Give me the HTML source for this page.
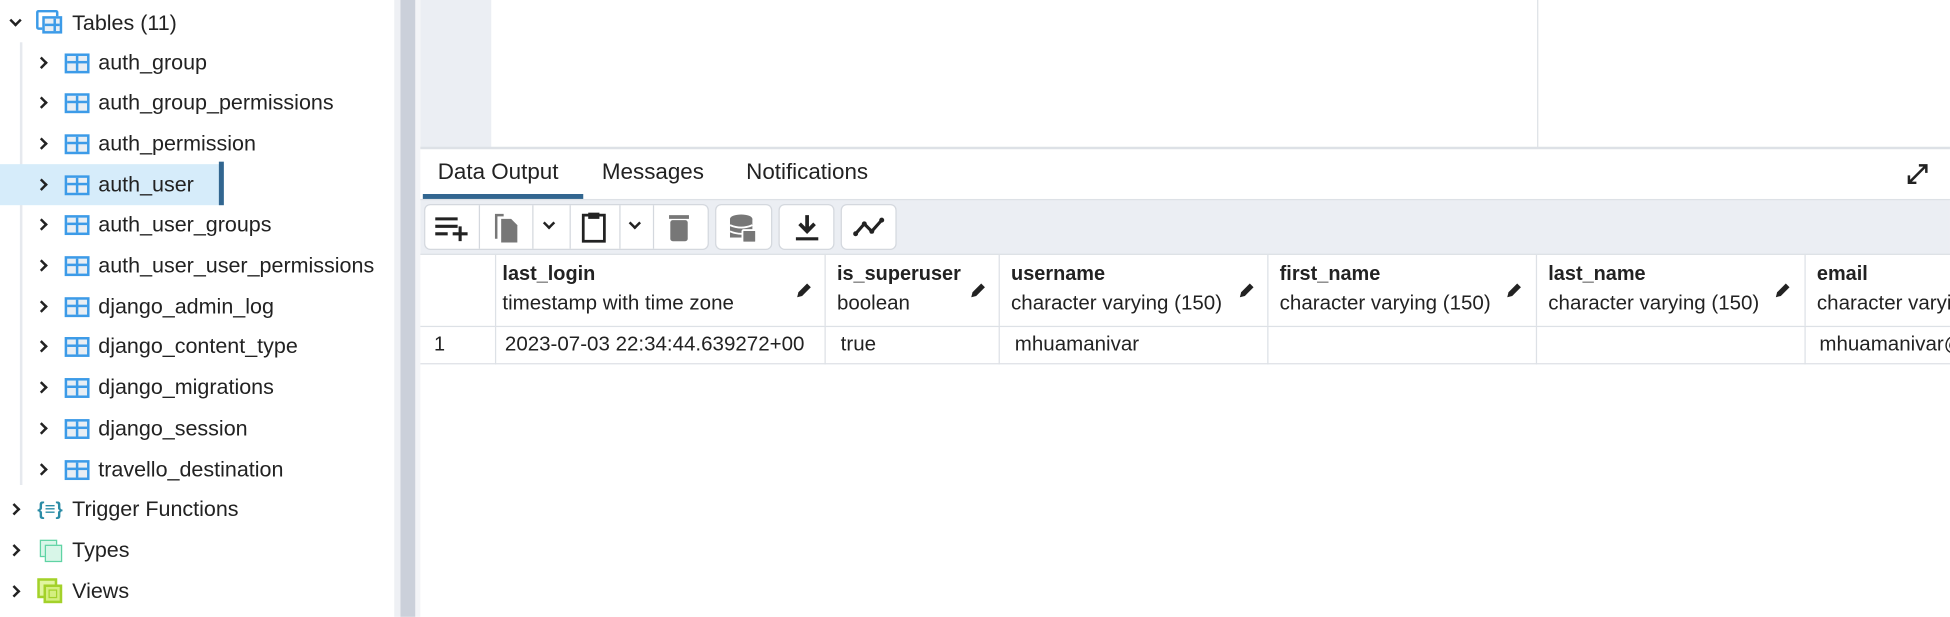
<!DOCTYPE html>
<html><head><meta charset="utf-8"><style>
*{margin:0;padding:0;box-sizing:border-box}
html,body{width:1950px;height:617px;overflow:hidden;background:#fff}
#w{position:absolute;left:0;top:0;width:1568px;height:496px;transform:scale(1.2436);transform-origin:0 0;font-family:"Liberation Sans",sans-serif;color:#222}
.a{position:absolute}
.tr{position:absolute;left:0;height:33px;width:318px;font-size:17.3px;line-height:33px;white-space:nowrap}
.chev{position:absolute;width:7px;height:7px;border-right:2px solid #222;border-top:2px solid #222;transform:rotate(45deg)}
.ti{position:absolute;width:20px;height:16px;border:2px solid #3c9be8;background:#e8eef4}
.ti:before{content:"";position:absolute;left:0;right:0;top:4px;border-top:2px solid #3c9be8}
.ti:after{content:"";position:absolute;top:0;bottom:0;left:7px;border-left:2px solid #3c9be8}
.th{position:absolute;top:205px;height:57px;border-right:1px solid #dde1e6;padding:5px 0 0 6px;overflow:hidden}
.th b{display:block;font-size:16px;line-height:22px;color:#222}
.th span{display:block;font-size:16.5px;line-height:24px;color:#222;white-space:nowrap}
.td{position:absolute;top:262px;height:31px;border-right:1px solid #dde1e6;font-size:16.5px;line-height:31px;padding-left:8px;white-space:nowrap;overflow:hidden}
.pen{position:absolute;top:226px;width:14px;height:14px}
.btn{position:absolute;top:164px;height:37px;background:#fff;border:1px solid #d4d8de;border-radius:5px}
</style></head><body><div id="w">
<div class="a" style="left:16px;top:34px;width:2px;height:356px;background:#e6e9ee"></div>
<div class="a" style="left:0;top:132px;width:180px;height:33px;background:#d6ecfa"></div>
<div class="a" style="left:176px;top:130px;width:4px;height:35px;background:#326690"></div>
<div class="tr" style="top:2px"><div class="chev" style="left:9px;top:11px;transform:rotate(135deg)"></div>
<div class="a" style="left:29px;top:6px;width:18px;height:16px;border:2px solid #3c9be8;border-radius:2px"></div><div class="ti" style="left:34px;top:11px;width:16px;height:14px"></div>
<span class="a" style="left:58px">Tables (11)</span></div>
<div class="tr" style="top:34px"><div class="chev" style="left:30px;top:13px"></div><div class="ti" style="left:52px;top:9px"></div><span class="a" style="left:79px">auth_group</span></div>
<div class="tr" style="top:66px"><div class="chev" style="left:30px;top:13px"></div><div class="ti" style="left:52px;top:9px"></div><span class="a" style="left:79px">auth_group_permissions</span></div>
<div class="tr" style="top:99px"><div class="chev" style="left:30px;top:13px"></div><div class="ti" style="left:52px;top:9px"></div><span class="a" style="left:79px">auth_permission</span></div>
<div class="tr" style="top:132px"><div class="chev" style="left:30px;top:13px"></div><div class="ti" style="left:52px;top:9px"></div><span class="a" style="left:79px">auth_user</span></div>
<div class="tr" style="top:164px"><div class="chev" style="left:30px;top:13px"></div><div class="ti" style="left:52px;top:9px"></div><span class="a" style="left:79px">auth_user_groups</span></div>
<div class="tr" style="top:197px"><div class="chev" style="left:30px;top:13px"></div><div class="ti" style="left:52px;top:9px"></div><span class="a" style="left:79px">auth_user_user_permissions</span></div>
<div class="tr" style="top:230px"><div class="chev" style="left:30px;top:13px"></div><div class="ti" style="left:52px;top:9px"></div><span class="a" style="left:79px">django_admin_log</span></div>
<div class="tr" style="top:262px"><div class="chev" style="left:30px;top:13px"></div><div class="ti" style="left:52px;top:9px"></div><span class="a" style="left:79px">django_content_type</span></div>
<div class="tr" style="top:295px"><div class="chev" style="left:30px;top:13px"></div><div class="ti" style="left:52px;top:9px"></div><span class="a" style="left:79px">django_migrations</span></div>
<div class="tr" style="top:328px"><div class="chev" style="left:30px;top:13px"></div><div class="ti" style="left:52px;top:9px"></div><span class="a" style="left:79px">django_session</span></div>
<div class="tr" style="top:361px"><div class="chev" style="left:30px;top:13px"></div><div class="ti" style="left:52px;top:9px"></div><span class="a" style="left:79px">travello_destination</span></div>
<div class="tr" style="top:393px"><div class="chev" style="left:8px;top:13px"></div>
<span class="a" style="left:30px;top:0;color:#2b8ca6;font-size:15px;font-weight:bold">{≡}</span><span class="a" style="left:58px">Trigger Functions</span></div>
<div class="tr" style="top:426px"><div class="chev" style="left:8px;top:13px"></div>
<div class="a" style="left:32px;top:8px;width:14px;height:14px;border:1.5px solid #5fd3a4;background:#d8f6e8"></div><div class="a" style="left:36px;top:12px;width:14px;height:14px;border:1.5px solid #5fd3a4;background:#d8f6e8"></div><span class="a" style="left:58px">Types</span></div>
<div class="tr" style="top:459px"><div class="chev" style="left:8px;top:13px"></div>
<div class="a" style="left:30px;top:6px;width:16px;height:16px;border:2px solid #a3d12a;background:#e0f5a0"></div><div class="a" style="left:35px;top:11px;width:15px;height:15px;border:2px solid #a3d12a;background:#d4ef80"></div><div class="a" style="left:39px;top:15px;width:7px;height:7px;border:1.5px solid #a3d12a"></div><span class="a" style="left:58px">Views</span></div>
<div class="a" style="left:317px;top:0;width:5px;height:496px;background:#eef0f4"></div>
<div class="a" style="left:322px;top:0;width:12px;height:496px;background:#cbd0da"></div>
<div class="a" style="left:334px;top:0;width:4px;height:496px;background:#f3f4f7"></div>
<div class="a" style="left:338px;top:0;width:57px;height:119px;background:#ebeef3"></div>
<div class="a" style="left:1236px;top:0;width:1px;height:119px;background:#dde1e6"></div>
<div class="a" style="left:338px;top:118px;width:1230px;height:2px;background:#dde1e6"></div>
<span class="a" style="left:352px;top:128px;font-size:18px">Data Output</span>
<span class="a" style="left:484px;top:128px;font-size:18px">Messages</span>
<span class="a" style="left:600px;top:128px;font-size:18px">Notifications</span>
<div class="a" style="left:340px;top:156px;width:129px;height:4px;background:#326690"></div>
<svg class="a" style="left:1532px;top:130px" width="20" height="20" viewBox="0 0 20 20"><path d="M3 17L17 3M11 3h6v6M3 11v6h6" stroke="#222" stroke-width="2" fill="none"/></svg>
<div class="a" style="left:338px;top:160px;width:1230px;height:45px;background:#ebeef3;border-top:1px solid #dde1e6;border-bottom:1px solid #dde1e6"></div>
<div class="btn" style="left:341px;width:229px"></div>
<div class="a" style="left:385px;top:165px;width:1px;height:35px;background:#d4d8de"></div>
<div class="a" style="left:428px;top:165px;width:1px;height:35px;background:#d4d8de"></div>
<div class="a" style="left:458px;top:165px;width:1px;height:35px;background:#d4d8de"></div>
<div class="a" style="left:498px;top:165px;width:1px;height:35px;background:#d4d8de"></div>
<div class="a" style="left:525px;top:165px;width:1px;height:35px;background:#d4d8de"></div>
<svg class="a" style="left:348px;top:172px" width="32" height="22"><path d="M2 4h18M2 10h18M2 16h10M22 10v12M16 16h12" stroke="#222" stroke-width="2.5"/></svg>
<svg class="a" style="left:394px;top:170px" width="24" height="26"><path d="M4 2h7v2H6v18H4z" fill="#777"/><path d="M9 6h8l5 5v14H9z" fill="#777"/></svg>
<div class="chev" style="left:438px;top:176px;transform:rotate(135deg)"></div>
<svg class="a" style="left:466px;top:169px" width="24" height="28"><rect x="3" y="4" width="17" height="21" fill="none" stroke="#222" stroke-width="2.2"/><rect x="7" y="2" width="9" height="5" fill="#222"/></svg>
<div class="chev" style="left:507px;top:176px;transform:rotate(135deg)"></div>
<svg class="a" style="left:536px;top:170px" width="22" height="26"><rect x="3" y="7" width="14" height="17" rx="2" fill="#777"/><rect x="2" y="3" width="16" height="3" fill="#777"/></svg>
<div class="btn" style="left:575px;width:46px"></div>
<svg class="a" style="left:585px;top:171px" width="26" height="26"><ellipse cx="11" cy="5" rx="9" ry="3.5" fill="#777"/><rect x="2" y="5" width="18" height="15" fill="#777"/><path d="M2 10q9 4 18 0M2 15q9 4 18 0" stroke="#fff" stroke-width="1.5" fill="none"/><rect x="12" y="14" width="11" height="10" rx="1" fill="#777" stroke="#fff" stroke-width="1.5"/></svg>
<div class="btn" style="left:626px;width:45px"></div>
<svg class="a" style="left:636px;top:171px" width="26" height="24"><path d="M13 2v12M7 9l6 6 6-6" stroke="#222" stroke-width="3" fill="none"/><path d="M4 21h18" stroke="#222" stroke-width="2.5"/></svg>
<div class="btn" style="left:676px;width:45px"></div>
<svg class="a" style="left:686px;top:171px" width="26" height="24"><path d="M2 17l7-8 6 6 8-9" stroke="#222" stroke-width="2.5" fill="none"/><circle cx="2" cy="17" r="2" fill="#222"/><circle cx="9" cy="9" r="2" fill="#222"/><circle cx="15" cy="15" r="2" fill="#222"/><circle cx="23" cy="6" r="2" fill="#222"/></svg>
<div class="a" style="left:338px;top:205px;width:1230px;height:88px;border-bottom:1px solid #dde1e6"></div>
<div class="a" style="left:338px;top:262px;width:1230px;height:1px;background:#dde1e6"></div>
<div class="a" style="left:398px;top:205px;width:1px;height:88px;background:#dde1e6"></div>
<div class="th" style="left:398px;width:266px"><b>last_login</b><span>timestamp with time zone</span></div>
<div class="th" style="left:664px;width:140px;padding-left:9px"><b>is_superuser</b><span>boolean</span></div>
<div class="th" style="left:804px;width:216px;padding-left:9px"><b>username</b><span>character varying (150)</span></div>
<div class="th" style="left:1020px;width:216px;padding-left:9px"><b>first_name</b><span>character varying (150)</span></div>
<div class="th" style="left:1236px;width:216px;padding-left:9px"><b>last_name</b><span>character varying (150)</span></div>
<div class="th" style="left:1452px;width:200px;padding-left:9px"><b>email</b><span>character varying (150)</span></div>
<svg class="pen" style="left:640px" viewBox="0 0 14 14"><path d="M1 13l1-4 7-7 3 3-7 7z" fill="#222"/></svg>
<svg class="pen" style="left:780px" viewBox="0 0 14 14"><path d="M1 13l1-4 7-7 3 3-7 7z" fill="#222"/></svg>
<svg class="pen" style="left:996px" viewBox="0 0 14 14"><path d="M1 13l1-4 7-7 3 3-7 7z" fill="#222"/></svg>
<svg class="pen" style="left:1211px" viewBox="0 0 14 14"><path d="M1 13l1-4 7-7 3 3-7 7z" fill="#222"/></svg>
<svg class="pen" style="left:1427px" viewBox="0 0 14 14"><path d="M1 13l1-4 7-7 3 3-7 7z" fill="#222"/></svg>
<span class="a" style="left:349px;top:262px;font-size:16px;line-height:31px">1</span>
<div class="td" style="left:398px;width:266px">2023-07-03 22:34:44.639272+00</div>
<div class="td" style="left:664px;width:140px;padding-left:12px">true</div>
<div class="td" style="left:804px;width:216px;padding-left:12px">mhuamanivar</div>
<div class="td" style="left:1020px;width:216px"></div>
<div class="td" style="left:1236px;width:216px"></div>
<div class="td" style="left:1452px;width:200px;padding-left:11px">mhuamanivar@</div>
</div></body></html>
